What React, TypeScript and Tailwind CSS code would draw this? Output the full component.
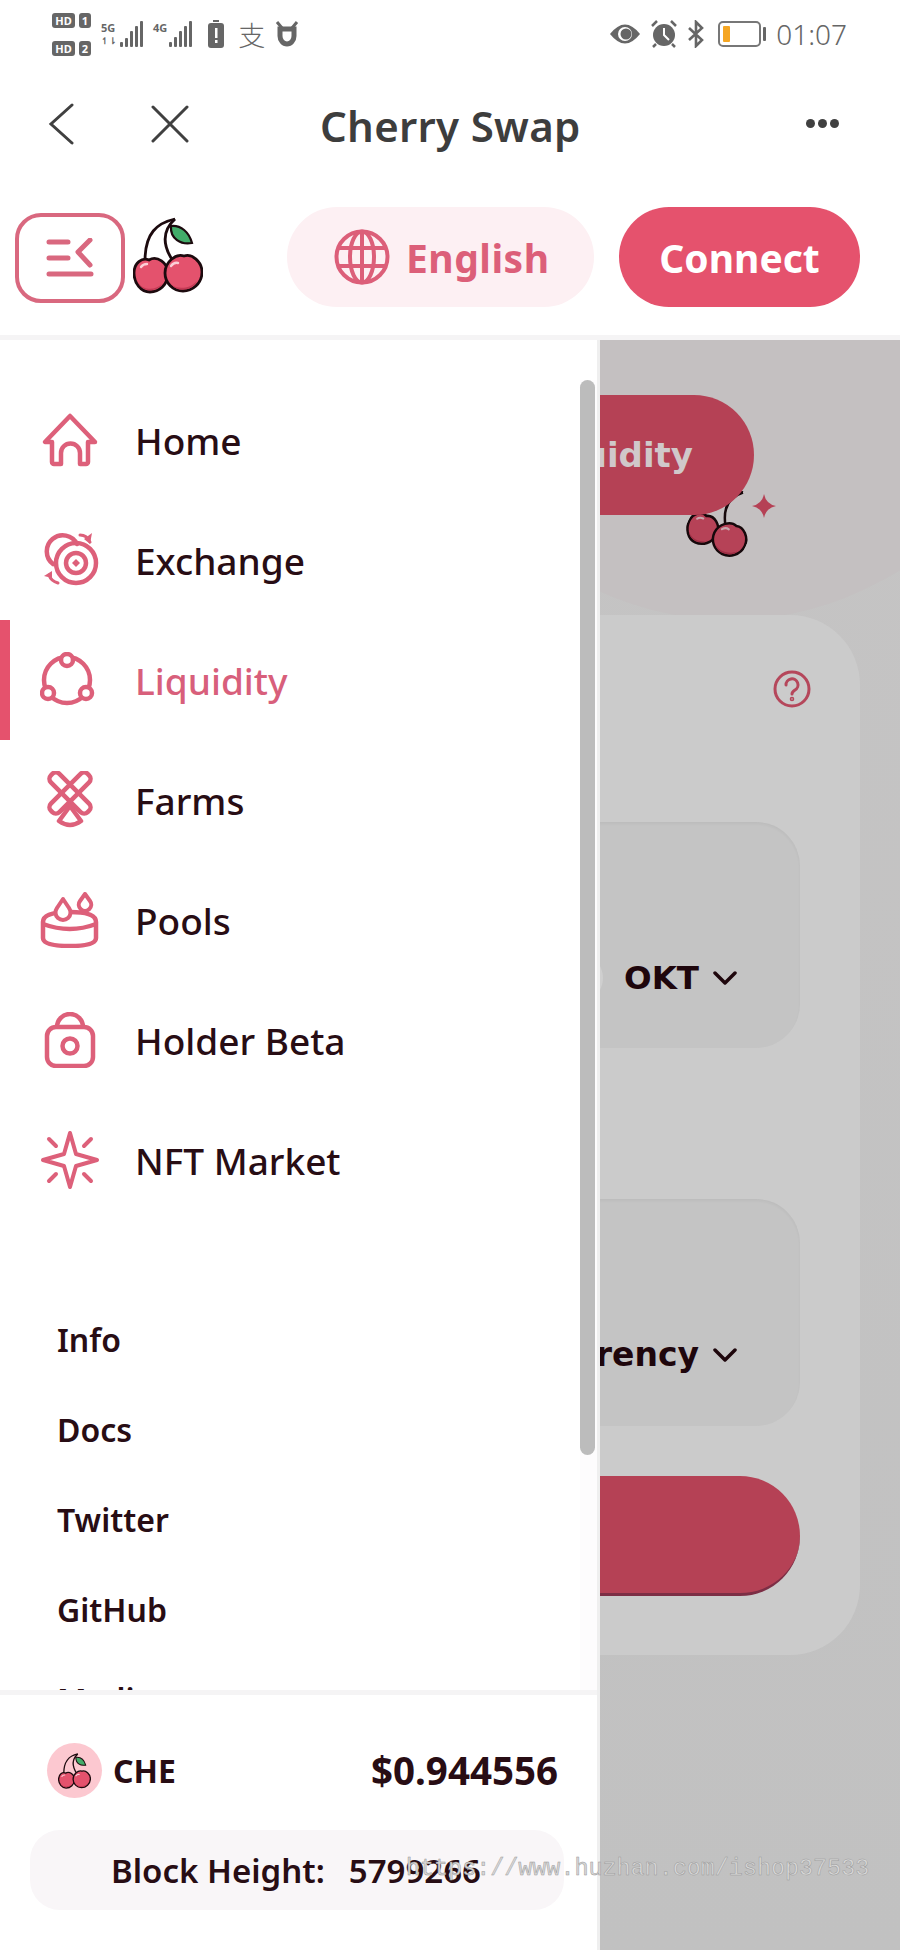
import React from "react";

const navStroke = "#dd607a";

const HomeIcon = () => (
  <svg width="60" height="56" viewBox="0 0 60 56" fill="none" stroke={navStroke} strokeWidth="4.5" strokeLinejoin="round">
    <path d="M30 4 L5 30 H12 V50 a2 2 0 0 0 2 2 H21 V41 a9.5 9.5 0 0 1 19 0 V52 H46 a2 2 0 0 0 2-2 V30 H55 Z" />
  </svg>
);

const ExchangeIcon = () => (
  <svg width="60" height="56" viewBox="0 0 60 56" fill="none" stroke={navStroke} strokeWidth="4.5" strokeLinecap="round">
    <circle cx="36" cy="31" r="20" />
    <circle cx="36" cy="31" r="10" />
    <path d="M36 27 l4 4 -4 4 -4 -4 Z" fill={navStroke} stroke="none" />
    <path d="M37 12 A16 16 0 1 0 13 32" />
    <path d="M40 3 Q47 3 50 10" strokeWidth="3" />
    <path d="M52 1 L50 12 L44 7 Z" fill={navStroke} stroke="none" />
    <path d="M9 43 Q11 49 18 51" strokeWidth="3" />
    <path d="M4 44 L12 39 L12 46 Z" fill={navStroke} stroke="none" />
  </svg>
);

const LiquidityIcon = () => (
  <svg width="60" height="56" viewBox="0 0 60 56" fill="none" stroke={navStroke} strokeWidth="4.5">
    <circle cx="27" cy="28" r="23" />
    <circle cx="27" cy="8" r="6" fill="#fff" />
    <circle cx="8" cy="41" r="6" fill="#fff" />
    <circle cx="46" cy="41" r="6" fill="#fff" />
  </svg>
);

const FarmsIcon = () => (
  <svg width="60" height="58" viewBox="0 0 60 58" fill="none" stroke={navStroke} strokeWidth="4.5" strokeLinejoin="round">
    <rect x="-26" y="-6" width="52" height="12" rx="5" transform="translate(30 22) rotate(45)" />
    <rect x="-26" y="-6" width="52" height="12" rx="5" transform="translate(30 22) rotate(-45)" />
    <path d="M30 35 L41 50 Q30 58 19 50 Z" />
  </svg>
);

const PoolsIcon = () => (
  <svg width="60" height="56" viewBox="0 0 60 56" fill="none" stroke={navStroke} strokeWidth="4.5" strokeLinejoin="round">
    <path d="M3 30 Q3 20 30 20 Q56 20 56 30 V46 Q56 54 30 54 Q3 54 3 46 Z" />
    <path d="M3 32 Q30 42 56 32" />
    <path d="M23 7 L29 16 A7.5 7.5 0 1 1 17 16 Z" fill="#fff" strokeWidth="4" />
    <path d="M45 2 L50 9 A6.2 6.2 0 1 1 40 9 Z" fill="#fff" strokeWidth="4" />
  </svg>
);

const HolderIcon = () => (
  <svg width="60" height="56" viewBox="0 0 60 56" fill="none" stroke={navStroke} strokeWidth="4.5">
    <rect x="7" y="15" width="46" height="39" rx="9" />
    <path d="M17 15 A13 13 0 0 1 43 15" />
    <circle cx="30" cy="34" r="7.5" />
  </svg>
);

const NftIcon = () => (
  <svg width="60" height="58" viewBox="0 0 60 58" fill="none" stroke={navStroke} strokeWidth="4" strokeLinecap="round" strokeLinejoin="round">
    <path d="M30 2 L36 23 L57 29 L36 35 L30 56 L24 35 L3 29 L24 23 Z" />
    <path d="M9 8 L16 15 M51 8 L44 15 M9 50 L16 43 M51 50 L44 43" />
  </svg>
);

const Cherry = ({ className = "", leaf = true }: { className?: string; leaf?: boolean }) => (
  <svg className={className} viewBox="0 0 70 77" fill="none">
    <path d="M42 2 C24 6 12 16 12 44" stroke="#1c0a0e" strokeWidth="2.8" />
    <path d="M42 2 C31 12 28 26 40 44" stroke="#1c0a0e" strokeWidth="2.8" />
    {leaf && <path d="M38 9 C48 8 56 15 59 26 C48 28 37 22 38 9 Z" fill="#42ad6a" stroke="#1c0a0e" strokeWidth="2.2" />}
    <path d="M16 43 C24 38 35 46 35 56 C35 68 26 75 17 75 C8 75 1 66 1 56 C1 46 9 40 16 43 Z" fill="#e4526d" stroke="#1c0a0e" strokeWidth="2.8" />
    <path d="M51 39 C59 36 69 45 69 55 C69 67 59 74 50 74 C40 74 32 66 32 56 C32 45 43 36 51 39 Z" fill="#e4526d" stroke="#1c0a0e" strokeWidth="2.8" />
    <path d="M5 66 C10 73 22 74 29 67 C24 75 10 76 5 66 Z M38 67 C44 73 57 72 64 64 C60 74 44 76 38 67 Z" fill="#c43a55" />
    <path d="M8 50 Q10 47 14 47 M38 49 Q41 45 45 46" stroke="#fbd0d8" strokeWidth="2.4" strokeLinecap="round" />
  </svg>
);

const Signal = ({ bars }: { bars: number[] }) => (
  <div className="flex items-end gap-[2px]">
    {bars.map((h, i) => (
      <span key={i} className="w-[3px] rounded-[1px] bg-[#666]" style={{ height: h }} />
    ))}
  </div>
);

const StatusBar = () => (
  <div className="flex h-[70px] items-center justify-between pb-[2px] pl-[52px] pr-[53px] text-[#666]">
    <div className="flex items-center">
      <div className="flex flex-col gap-[13px]">
        {["1", "2"].map((n) => (
          <div key={n} className="flex gap-[4px]">
            <span className="flex h-[15px] w-[23px] items-center justify-center rounded-[3px] bg-[#666] text-[11px] font-bold leading-none text-white">HD</span>
            <span className="flex h-[15px] w-[12px] items-center justify-center rounded-[3px] bg-[#666] text-[11px] font-bold leading-none text-white">{n}</span>
          </div>
        ))}
      </div>
      <div className="ml-[10px] flex items-end gap-[3px]">
        <div className="flex flex-col text-[11px] font-bold leading-[13px]">
          <span>5G</span>
          <span className="text-[9px]">↿⇂</span>
        </div>
        <Signal bars={[5, 9, 16, 21, 26]} />
      </div>
      <div className="ml-[10px] flex items-end gap-[2px]">
        <span className="self-start text-[11px] font-bold leading-[13px]">4G</span>
        <Signal bars={[5, 10, 16, 21, 26]} />
      </div>
      <svg className="ml-[16px]" width="16" height="28" viewBox="0 0 16 28">
        <rect x="5" y="0" width="6" height="2" fill="#666" />
        <rect x="0" y="3" width="16" height="25" rx="3" fill="#666" />
        <rect x="7" y="8" width="2.5" height="10" fill="#fff" />
        <rect x="7" y="20" width="2.5" height="3" fill="#fff" />
      </svg>
      <span className="ml-[14px] font-['Noto_Sans_CJK_SC',sans-serif] text-[27px] font-light leading-none text-[#666]">支</span>
      <svg className="ml-[9px]" width="26" height="26" viewBox="0 0 26 26" fill="none" stroke="#666" strokeWidth="5">
        <path d="M6 8 V15 A7 8 0 0 0 20 15 V8 Z" />
        <path d="M3 1 L8 7 M23 1 L18 7" strokeWidth="3" />
      </svg>
    </div>
    <div className="flex items-center">
      <svg width="32" height="22" viewBox="0 0 32 22">
        <path d="M1 11 Q16 -8 31 11 Q16 30 1 11 Z" fill="#666" />
        <circle cx="16" cy="11" r="7" fill="#fff" />
        <circle cx="17" cy="11" r="5.5" fill="#666" />
      </svg>
      <svg className="ml-[9px]" width="28" height="28" viewBox="0 0 28 28" fill="none">
        <circle cx="14" cy="15" r="11" fill="#666" />
        <path d="M14 8 V15 L19 20" stroke="#fff" strokeWidth="2" />
        <path d="M2 6 L7 1 M26 6 L21 1 M6 24 L3 27 M22 24 L25 27" stroke="#666" strokeWidth="2.5" />
      </svg>
      <svg className="ml-[9px]" width="18" height="28" viewBox="0 0 18 28" fill="none" stroke="#666" strokeWidth="2.6">
        <path d="M2 8 L15 20 L9 26 V2 L15 8 L2 20" />
      </svg>
      <div className="ml-[13px] flex items-center gap-[2px]">
        <div className="h-[26px] w-[43px] rounded-[5px] border-[2px] border-[#777] p-[3px]">
          <div className="h-full w-[7px] rounded-[1px] bg-[#f5a623]" />
        </div>
        <span className="h-[14px] w-[3px] rounded-[1px] bg-[#666]" />
      </div>
      <span className="ml-[10px] text-[28px] font-light leading-none text-[#666]">01:07</span>
    </div>
  </div>
);

const AppBar = () => (
  <div className="flex h-[120px] items-center pb-[8px] pl-[48px] pr-[61px]">
    <svg className="mb-[5px]" width="26" height="42" viewBox="0 0 26 42" fill="none" stroke="#404040" strokeWidth="3" strokeLinecap="round">
      <path d="M24 2 L3 21 L24 40" />
    </svg>
    <svg className="mb-[5px] ml-[77px]" width="38" height="38" viewBox="0 0 38 38" fill="none" stroke="#404040" strokeWidth="3" strokeLinecap="round">
      <path d="M2 2 L36 36 M36 2 L2 36" />
    </svg>
    <h1 className="ml-[131px] text-[42px] font-semibold leading-none tracking-[0.3px] text-[#3d3d3d]">Cherry Swap</h1>
    <div className="mb-[5px] ml-auto flex gap-[3px]">
      <span className="size-[9px] rounded-full bg-[#404040]" />
      <span className="size-[9px] rounded-full bg-[#404040]" />
      <span className="size-[9px] rounded-full bg-[#404040]" />
    </div>
  </div>
);

const TopBar = () => (
  <div className="flex h-[150px] items-start border-b-[5px] border-[#f5f4f5] pl-[15px] pr-[40px]">
    <button className="mt-[23px] flex h-[90px] w-[110px] items-center justify-center rounded-[26px] border-[4px] border-[#d9687f]">
      <svg width="48" height="40" viewBox="0 0 48 40" fill="none" stroke="#d9687f" strokeWidth="5" strokeLinecap="round" strokeLinejoin="round">
        <path d="M3 4 H22 M3 20 H22 M3 36 H45 M44 2 L32 14 L44 27" />
      </svg>
    </button>
    <Cherry className="ml-[8px] mt-[27px] h-[77px] w-[70px]" />
    <button className="ml-[84px] mt-[17px] flex h-[100px] w-[307px] items-center rounded-full bg-[#fdf0f3] pl-[47px]">
      <svg width="56" height="56" viewBox="0 0 56 56" fill="none" stroke="#dc5f79" strokeWidth="4">
        <circle cx="28" cy="28" r="25.5" />
        <ellipse cx="28" cy="28" rx="12" ry="25.5" />
        <path d="M28 2 V54 M4 19 H52 M4 37 H52" />
      </svg>
      <span className="ml-[16px] text-[39px] font-bold leading-none tracking-[0.5px] text-[#dc5f79]">English</span>
    </button>
    <button className="ml-[25px] mt-[17px] h-[100px] w-[241px] rounded-full bg-[#e5526d] text-[39px] font-bold leading-none text-white">Connect</button>
  </div>
);

const navItems = [
  { label: "Home", icon: <HomeIcon /> },
  { label: "Exchange", icon: <ExchangeIcon /> },
  { label: "Liquidity", icon: <LiquidityIcon />, active: true },
  { label: "Farms", icon: <FarmsIcon /> },
  { label: "Pools", icon: <PoolsIcon /> },
  { label: "Holder Beta", icon: <HolderIcon /> },
  { label: "NFT Market", icon: <NftIcon /> },
];

const links = ["Info", "Docs", "Twitter", "GitHub", "Medium"];

const Sidebar = () => (
  <aside className="flex h-full w-[600px] shrink-0 flex-col border-r-[3px] border-[#efefef] bg-white">
    <div className="relative flex-1 overflow-hidden pt-[40px]">
      <div className="absolute bottom-0 right-0 top-[40px] w-[17px] bg-[#fdfcfd]">
        <div className="h-[1075px] w-[15px] rounded-full bg-[#bcbcbc]" />
      </div>
      {navItems.map((item) => (
        <div key={item.label} className={item.active ? "flex h-[120px] items-center border-l-[10px] border-[#e5526d] pl-[30px]" : "flex h-[120px] items-center pl-[40px]"}>
          <span className="flex w-[95px] justify-start">{item.icon}</span>
          <span className={item.active ? "mt-[1px] text-[37px] font-medium leading-none text-[#d85f7b]" : "mt-[1px] text-[37px] font-medium leading-none text-[#280d14]"}>{item.label}</span>
        </div>
      ))}
      <div className="mt-[74px]">
        {links.map((l) => (
          <div key={l} className="flex h-[90px] items-center pl-[57px] pt-[2px] text-[32px] font-semibold leading-none text-[#280d14]">{l}</div>
        ))}
      </div>
    </div>
    <div className="h-[260px] shrink-0 border-t-[5px] border-[#f5f4f5] px-[30px] pt-[48px]">
      <div className="flex items-center pl-[17px] pr-[9px]">
        <span className="flex size-[55px] items-center justify-center rounded-full bg-[#fcc8d0]">
          <Cherry className="h-[36px] w-[33px]" />
        </span>
        <span className="ml-[11px] text-[32px] font-bold leading-none text-[#280d14]">CHE</span>
        <span className="ml-auto text-[38.5px] font-bold leading-none text-[#280d14]">$0.944556</span>
      </div>
      <div className="mt-[32px] flex h-[80px] w-[534px] items-center rounded-[30px] bg-[#f9f6f8] pl-[81px] text-[33px] font-semibold leading-none text-[#280d14]">
        <span>Block Height:</span>
        <span className="ml-[24px]">5799266</span>
      </div>
    </div>
  </aside>
);

const Chevron = () => (
  <svg className="ml-[14px] shrink-0" width="24" height="14" viewBox="0 0 24 14" fill="none" stroke="#1e060c" strokeWidth="3.5" strokeLinecap="round" strokeLinejoin="round">
    <path d="M2 2 L12 12 L22 2" />
  </svg>
);

const Dimmed = () => (
  <main className="relative h-full flex-1 overflow-hidden bg-linear-to-b from-[#c5c4c4] to-[#c1c1c1] pt-[55px]">
    <div className="absolute left-[-270px] top-[-770px] h-[1050px] w-[800px] rounded-[50%] bg-[#c4c0c1]" />
    <Cherry leaf={false} className="absolute left-[92px] top-[145px] h-[69px] w-[63px] rotate-[25deg] brightness-[0.8]" />
    <svg className="absolute left-[152px] top-[154px]" width="24" height="24" viewBox="0 0 24 24" fill="#b54155">
      <path d="M12 0 Q14 10 24 12 Q14 14 12 24 Q10 14 0 12 Q10 10 12 0 Z" />
    </svg>
    <div className="relative -ml-[200px] flex h-[120px] w-[354px] items-center justify-end rounded-r-full bg-[#b54155] pr-[61px] font-['DejaVu_Sans',sans-serif] text-[34px] font-bold leading-none text-[#d0c8ca]">
      Liquidity
    </div>
    <section className="relative -ml-[100px] mr-[40px] mt-[100px] h-[1040px] rounded-[70px] bg-[#cbcbcb] pl-[20px] pr-[60px] pt-[55px]">
      <div className="-mr-[11px] flex justify-end">
        <svg width="38" height="38" viewBox="0 0 38 38" fill="none" stroke="#b5475b" strokeWidth="3" strokeLinecap="round">
          <circle cx="19" cy="19" r="17" />
          <path d="M13 15 a6 6 0 1 1 9 5 q-3 2 -3 4" />
          <circle cx="19" cy="29" r="0.8" />
        </svg>
      </div>
      <div className="mt-[114px] flex h-[226px] items-center justify-end rounded-[44px] bg-[#c4c4c4] pr-[63px] pt-[86px] font-['DejaVu_Sans',sans-serif] text-[32.5px] font-bold leading-none text-[#1e060c] shadow-[inset_0_2px_3px_rgba(0,0,0,0.04)]">
        <span className="mr-[21px] size-[48px] shrink-0 rounded-full bg-[#cfcfcf]" />
        <span>OKT</span>
        <Chevron />
      </div>
      <div className="mt-[151px] flex h-[227px] items-center justify-end rounded-[44px] bg-[#c4c4c4] pr-[63px] pt-[84px] font-['DejaVu_Sans',sans-serif] text-[33px] font-bold leading-none text-[#1e060c] shadow-[inset_0_2px_3px_rgba(0,0,0,0.04)]">
        <span className="shrink-0 whitespace-nowrap">Select a currency</span>
        <Chevron />
      </div>
      <div className="mt-[50px] h-[120px] rounded-[60px] border-b-[3px] border-[#7c2e45] bg-[#b54155]" />
    </section>
  </main>
);

export default function App() {
  return (
    <div className="relative h-[1950px] w-[900px] overflow-hidden bg-white font-['Noto_Sans',sans-serif]">
      <StatusBar />
      <AppBar />
      <TopBar />
      <div className="flex h-[1610px]">
        <Sidebar />
        <Dimmed />
      </div>
      <span className="absolute left-[406px] top-[1858px] whitespace-nowrap font-['Liberation_Mono',monospace] text-[23.4px] leading-none text-[#d8d8d8] [-webkit-text-stroke:0.5px_#999]">
        https://www.huzhan.com/ishop37533
      </span>
    </div>
  );
}
